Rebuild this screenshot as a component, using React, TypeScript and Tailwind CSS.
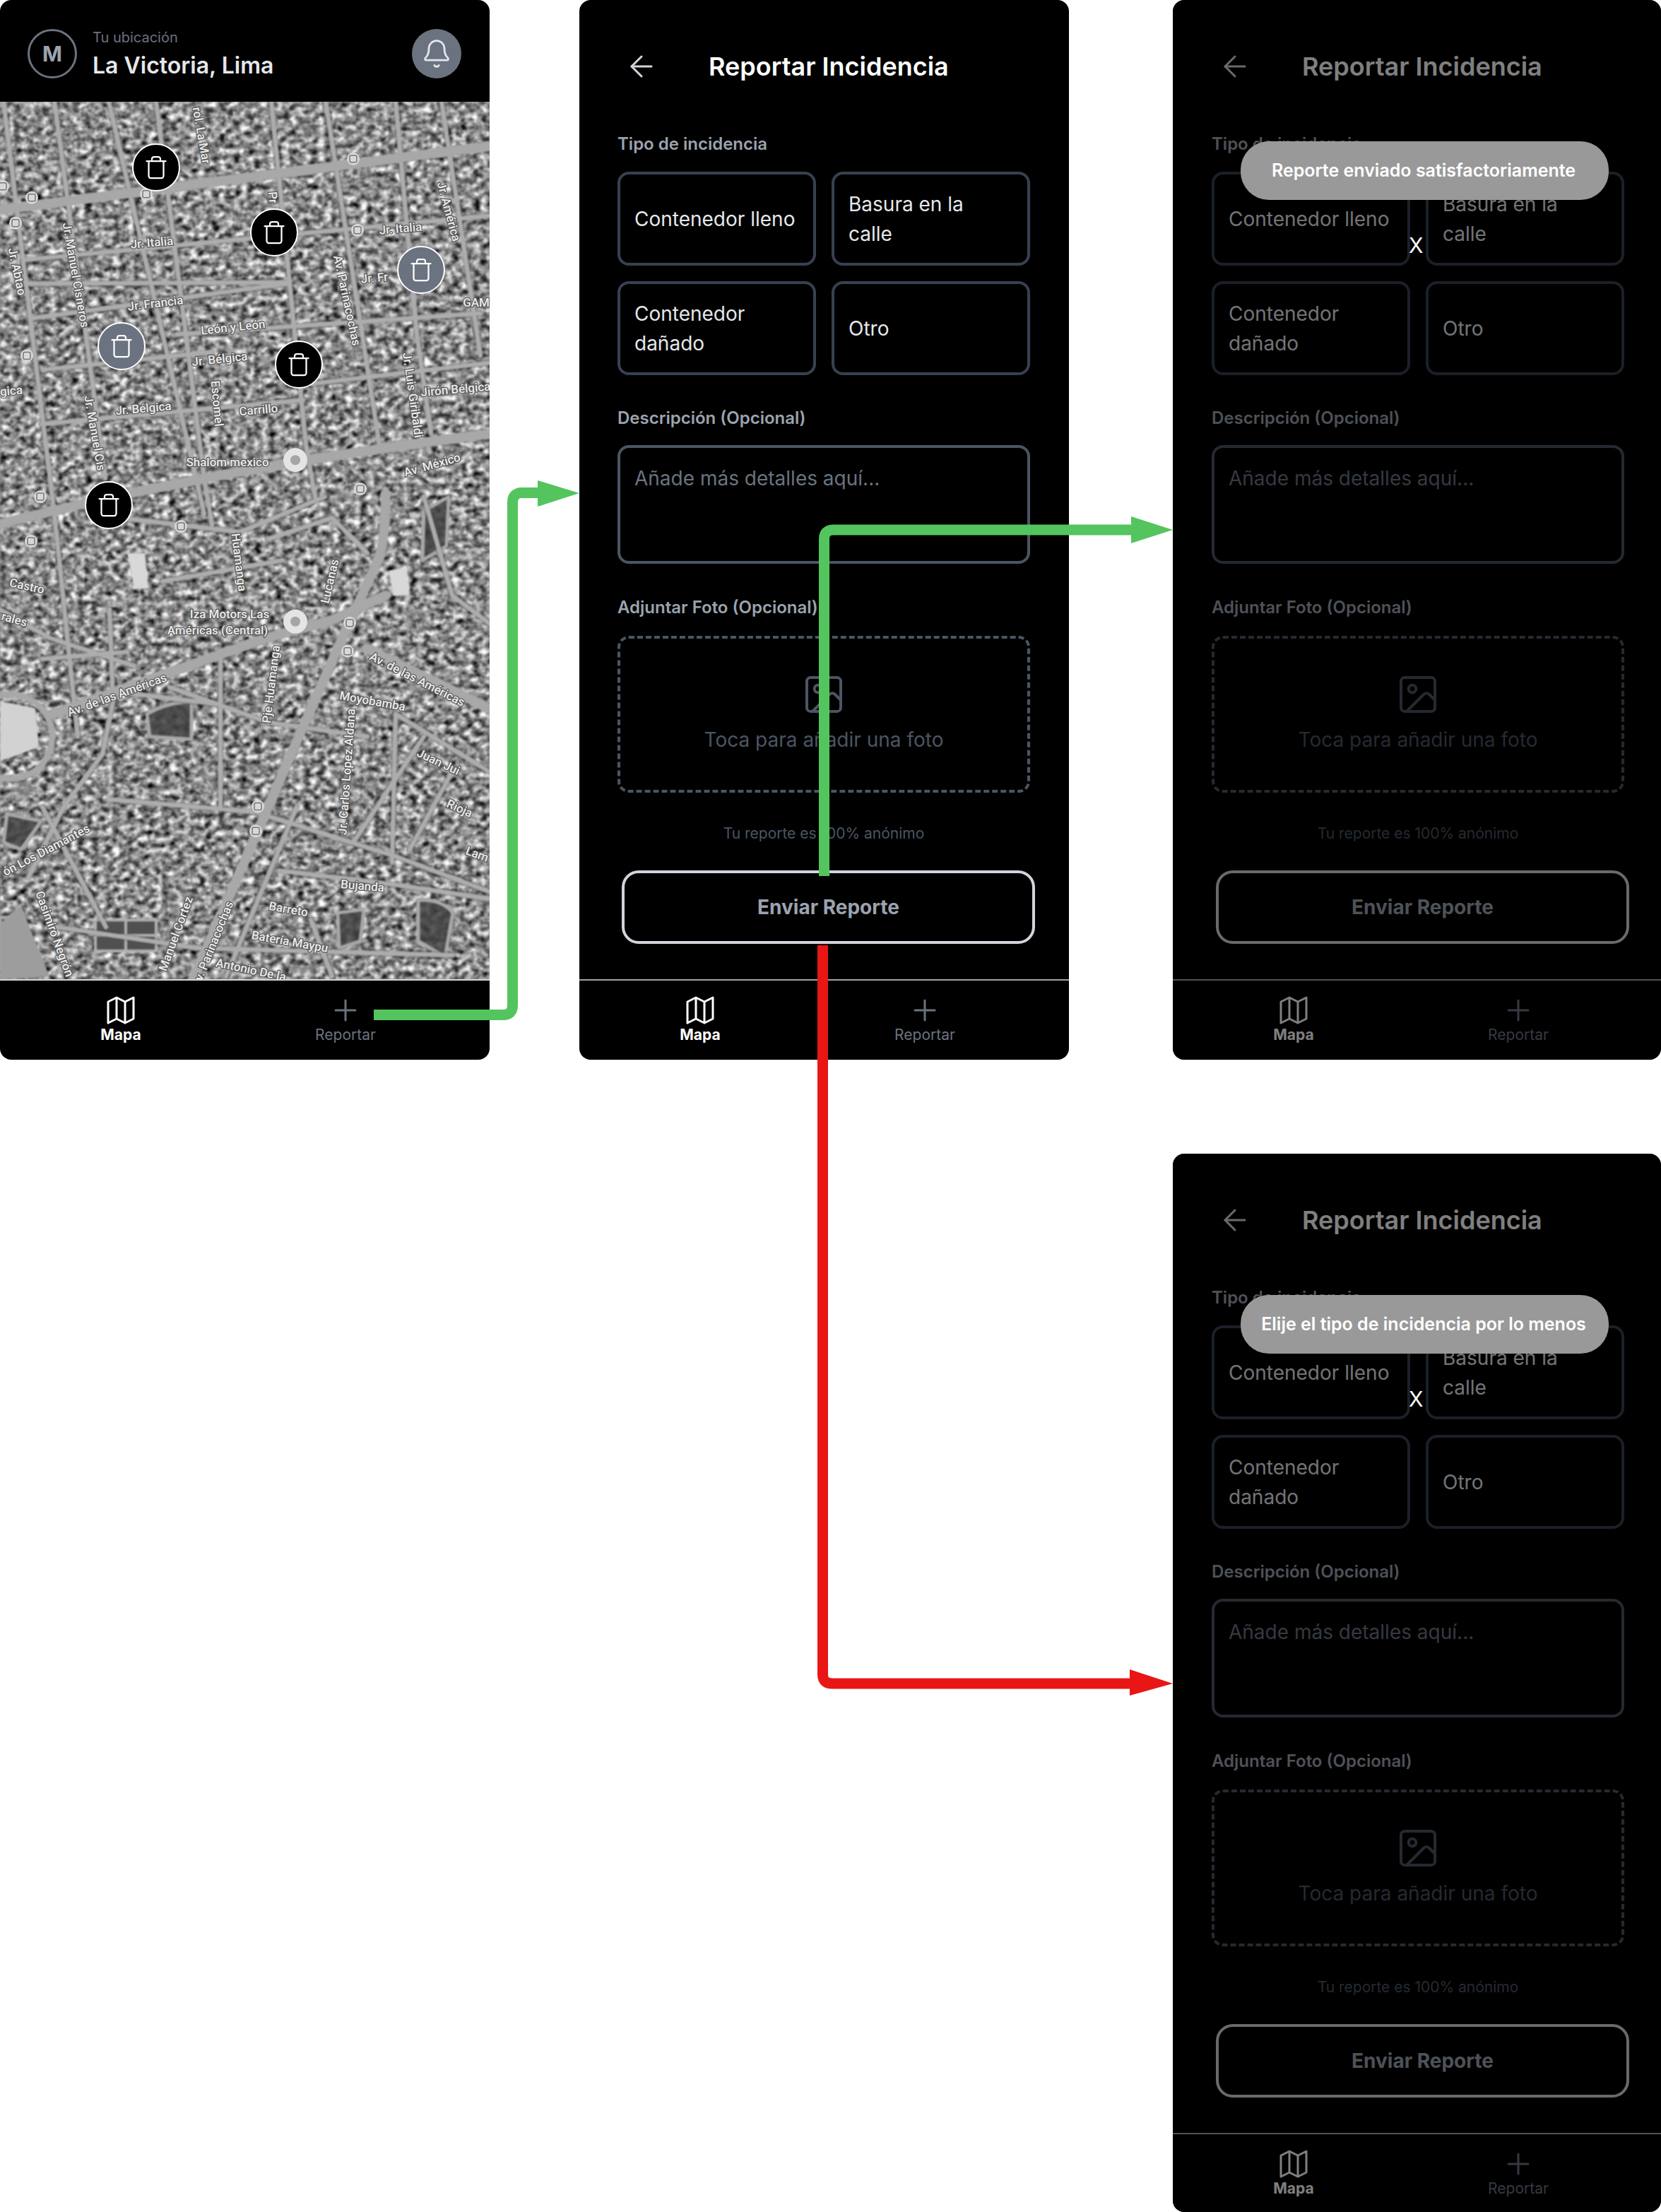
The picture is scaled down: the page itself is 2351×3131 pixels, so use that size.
import { ArrowLeft, Bell, Image, Plus, Trash } from "lucide-react";

const options = ["Contenedor lleno", "Basura en la calle", "Contenedor dañado", "Otro"];

const markers = [
  { x: 221, y: 93, dark: true },
  { x: 388, y: 185, dark: true },
  { x: 596, y: 238, dark: false },
  { x: 172, y: 346, dark: false },
  { x: 423, y: 372, dark: true },
  { x: 154, y: 571, dark: true },
];

// map drawing, coordinates are relative to the top of the map
const wideRoads = [
  "M-5 154 L700 62",
  "M-5 600 Q300 520 700 470",
  "M546 556 Q545 620 537 645 L452 833 L271 1250",
  "M75 868 L375 761 L470 735 L546 700",
  "M519 775 L700 864",
];

const roads = [
  "M5 0 L77 584 L110 900",
  "M77 0 L149 534",
  "M154 0 L289 584",
  "M221 0 L289 534 L300 600",
  "M384 0 L433 486 L446 560",
  "M461 0 L537 486",
  "M560 0 L590 330 L610 470",
  "M625 0 L680 360",
  "M36 224 L700 161",
  "M36 258 L406 256",
  "M45 307 L406 258",
  "M250 330 L680 300",
  "M59 457 L429 423",
  "M60 380 L300 355",
  "M440 400 L693 370",
  "M154 989 L361 1007 L560 1070 L693 1120",
  "M160 836 L300 853",
  "M312 788 L312 1002",
  "M560 868 L555 1078",
  "M155 720 L160 850 L145 925 L90 1000 L40 1100",
  "M0 720 L70 760 L190 800",
  "M60 1000 L150 1170",
  "M170 590 L340 610 L460 560",
  "M240 830 L380 880 L520 900",
  "M395 1090 L560 1110 L693 1130",
  "M80 1170 L280 1200 L640 1210",
  "M420 1000 L320 1240",
  "M560 868 L693 950",
  "M600 560 L640 700 L693 740",
  "M380 620 L470 590 L520 640",
  "M230 680 L400 650",
  "M440 1160 L470 1240",
  "M600 900 L500 1050",
  "M60 790 L180 780",
  "M640 950 L580 1060",
];

const parks = [
  "M208 868 Q240 850 271 851 L271 904 L212 900 Z",
  "M10 1010 L58 1020 L30 1060 L5 1050 Z",
  "M592 1132 Q625 1130 641 1150 L630 1212 L592 1190 Z",
  "M600 580 L635 560 L632 630 L598 650 Z",
  "M0 1156 L30 1160 L30 1220 L0 1230 Z",
  "M478 1150 L515 1145 L510 1190 L480 1200 Z",
];

const mapLabels = [
  { t: "Jr. Italia", x: 215, y: 201, r: -5 },
  { t: "Jr. Manuel Cisneros", x: 106, y: 246, r: 80 },
  { t: "Jr. Abtao", x: 23, y: 241, r: 78 },
  { t: "Jr. Francia", x: 220, y: 287, r: -7 },
  { t: "León y León", x: 330, y: 321, r: -6 },
  { t: "Jr. Bélgica", x: 311, y: 366, r: -6 },
  { t: "Jr. Bélgica", x: 203, y: 436, r: -5 },
  { t: "Carrillo", x: 366, y: 438, r: -5 },
  { t: "Escomel", x: 306, y: 428, r: 85 },
  { t: "Jr. Manuel Cis", x: 133, y: 470, r: 80 },
  { t: "Shalom mexico", x: 322, y: 512, r: 0 },
  { t: "Av. Parinacochas", x: 490, y: 282, r: 78 },
  { t: "Jr. Italia", x: 567, y: 181, r: -5 },
  { t: "Jr. América", x: 634, y: 156, r: 75 },
  { t: "Jr. Luis Giribaldi", x: 583, y: 416, r: 82 },
  { t: "Jirón Bélgica", x: 645, y: 409, r: -5 },
  { t: "Av. México", x: 612, y: 516, r: -16 },
  { t: "Jr. Fr", x: 530, y: 251, r: -5 },
  { t: "GAM", x: 674, y: 286, r: 0 },
  { t: "gica", x: 16, y: 411, r: -5 },
  { t: "rol. La Mar", x: 284, y: 48, r: 80 },
  { t: "Pr", x: 385, y: 136, r: 85 },
  { t: "Huamanga", x: 337, y: 653, r: 83 },
  { t: "Castro", x: 38, y: 688, r: 12 },
  { t: "rales", x: 20, y: 735, r: 15 },
  { t: "Lucanas", x: 468, y: 680, r: -77 },
  { t: "Iza Motors Las", x: 325, y: 728, r: 0 },
  { t: "Américas (Central)", x: 308, y: 751, r: 0 },
  { t: "Av. de las Américas", x: 166, y: 842, r: -20 },
  { t: "Pje Huamanga", x: 385, y: 826, r: -83 },
  { t: "Av. de las Américas", x: 590, y: 820, r: 27 },
  { t: "Moyobamba", x: 527, y: 851, r: 10 },
  { t: "Jr. Carlos Lopez Aldana", x: 492, y: 950, r: -86 },
  { t: "Juan Jui", x: 620, y: 937, r: 25 },
  { t: "Rioja", x: 650, y: 1003, r: 25 },
  { t: "Casimiro Negrón", x: 76, y: 1180, r: 70 },
  { t: "ón Los Diamantes", x: 66, y: 1062, r: -28 },
  { t: "Manuel Cortez", x: 250, y: 1180, r: -70 },
  { t: "Av. Parinacochas", x: 302, y: 1195, r: -68 },
  { t: "Bujanda", x: 513, y: 1113, r: 5 },
  { t: "Barreto", x: 408, y: 1146, r: 10 },
  { t: "Batería Maypu", x: 410, y: 1192, r: 10 },
  { t: "Antonio De la", x: 355, y: 1232, r: 12 },
  { t: "Lam", x: 675, y: 1068, r: 20 },
];

const stops = [
  [45, 136], [207, 131], [22, 172], [500, 81], [506, 182], [38, 360], [57, 560],
  [510, 549], [256, 602], [44, 623], [495, 739], [492, 779], [365, 999], [362, 1034], [4, 120],
];

function MapPicture() {
  return (
    <svg viewBox="0 0 693 1244" preserveAspectRatio="none" className="block w-full h-full">
      <defs>
        <filter id="blocks" x="0" y="0" width="100%" height="100%" colorInterpolationFilters="sRGB">
          <feTurbulence type="fractalNoise" baseFrequency="0.1 0.12" numOctaves="3" seed="11" />
          <feColorMatrix
            type="matrix"
            values="1.05 1.05 0 0 -0.5 1.05 1.05 0 0 -0.5 1.05 1.05 0 0 -0.5 0 0 0 0 1"
          />
          <feGaussianBlur stdDeviation="0.9" />
        </filter>
        <filter id="soft" colorInterpolationFilters="sRGB">
          <feGaussianBlur stdDeviation="1.3" />
        </filter>
      </defs>
      <rect width="693" height="1244" fill="#8a8a8a" />
      <rect width="693" height="1244" filter="url(#blocks)" />
      <g filter="url(#soft)" fill="none" strokeLinecap="round" strokeLinejoin="round">
        {parks.map((d) => (
          <path key={d} d={d} fill="#404040" fillOpacity="0.85" stroke="#a8a8a8" strokeWidth="5" />
        ))}
        <circle cx="14" cy="900" r="60" stroke="#a8a8a8" strokeWidth="9" />
        <path d="M0 850 L50 860 L55 915 L0 935 Z" fill="#d2d2d2" />
        <path d="M135 1160 h86 v44 h-86 Z M135 1182 h86 M178 1160 v44" stroke="#b0b0b0" strokeWidth="4" fill="#505050" />
        <path d="M556 700 L580 700 L575 660 L550 665 Z M190 690 L210 690 L205 640 L180 640 Z" fill="#d8d8d8" />
        <path d="M0 1165 L30 1140 L70 1240 L0 1244 Z" fill="#9d9d9d" />
        {roads.map((d) => (
          <path key={d} d={d} stroke="#3e3e3e" strokeWidth="10" strokeOpacity="0.35" />
        ))}
        {roads.map((d) => (
          <path key={d + "t"} d={d} stroke="#adadad" strokeWidth="6.5" />
        ))}
        {wideRoads.map((d) => (
          <path key={d} d={d} stroke="#a8a8a8" strokeWidth="14" />
        ))}
      </g>
      {stops.map(([x, y]) => (
        <g key={`${x}-${y}`}>
          <circle cx={x} cy={y} r="9" fill="#d8d8d8" />
          <rect x={x - 5} y={y - 5} width="10" height="10" rx="2" fill="none" stroke="#777777" strokeWidth="1.5" />
        </g>
      ))}
      <g fontFamily="Roboto, sans-serif" fontSize="17" fontWeight="500" textAnchor="middle">
        {mapLabels.map((l) => (
          <text
            key={l.t + l.x}
            x={l.x}
            y={l.y}
            transform={`rotate(${l.r} ${l.x} ${l.y})`}
            dominantBaseline="middle"
            fill="#ececec"
            stroke="#5a5a5a"
            strokeWidth="2.5"
            paintOrder="stroke"
          >
            {l.t}
          </text>
        ))}
      </g>
      <circle cx="418" cy="508" r="17" fill="#e4e4e4" />
      <circle cx="418" cy="508" r="7" fill="#a5a5a5" />
      <circle cx="418" cy="737" r="17" fill="#e4e4e4" />
      <circle cx="418" cy="737" r="7" fill="#a5a5a5" />
    </svg>
  );
}

function FoldedMap({ className }: { className: string }) {
  return (
    <svg viewBox="0 0 24 24" fill="none" stroke="currentColor" strokeWidth="1.5" strokeLinejoin="round" className={className}>
      <path d="M3 6 L9 3 L15 6 L21 3 V18 L15 21 L9 18 L3 21 Z" />
      <path d="M9 3 V18 M15 6 V21" />
    </svg>
  );
}

function BottomNav() {
  return (
    <nav className="flex flex-1 pl-[12px] pt-[18px]">
      <div className="flex w-[318px] flex-col items-center text-white">
        <FoldedMap className="size-[48px]" />
        <span className="-mt-[3px] text-[21px] leading-[28px] font-bold">Mapa</span>
      </div>
      <div className="flex w-[318px] flex-col items-center text-[#6b7280]">
        <Plus className="size-[48px]" strokeWidth={1.5} />
        <span className="-mt-[3px] text-[21px] leading-[28px]">Reportar</span>
      </div>
    </nav>
  );
}

function MapScreen() {
  return (
    <section className="flex h-[1500px] w-[693px] flex-col overflow-hidden rounded-[16px] bg-black">
      <header className="flex h-[144px] items-center pl-[39px] pr-[40px] pt-[8px]">
        <div className="flex size-[70px] items-center justify-center rounded-full border-[3px] border-[#6b7280] text-[30px] font-bold text-[#9ca3af]">
          M
        </div>
        <div className="ml-[22px] flex-1">
          <p className="text-[20px] leading-[28px] text-[#6b7280]">Tu ubicación</p>
          <p className="mt-[5px] text-[32px] leading-[42px] font-semibold text-[#e5e7eb]">La Victoria, Lima</p>
        </div>
        <div className="flex size-[70px] items-center justify-center rounded-full bg-[#6b7280] text-[#e5e7eb]">
          <Bell className="size-[44px]" strokeWidth={1.5} />
        </div>
      </header>
      <div className="relative h-[1244px] border-b-[2px] border-[#d1d5db] bg-[#8a8a8a]">
        <MapPicture />
        {markers.map((m) => (
          <div
            key={m.x}
            className={`absolute flex size-[68px] -translate-x-1/2 -translate-y-1/2 items-center justify-center rounded-full border-[2px] border-white text-white ${
              m.dark ? "bg-black" : "bg-[#6b7280]"
            }`}
            style={{ left: m.x, top: m.y }}
          >
            <Trash className="size-[36px]" strokeWidth={1.5} />
          </div>
        ))}
      </div>
      <BottomNav />
    </section>
  );
}

function FieldLabel({ children }: { children: string }) {
  return <p className="h-[32px] text-[24px] leading-[32px] font-semibold text-[#9ca3af]">{children}</p>;
}

function ReportScreen({ toast, last }: { toast?: string; last?: boolean }) {
  return (
    <section
      className={`relative flex flex-col overflow-hidden rounded-[16px] bg-black ${
        last ? "h-[1498px]" : "h-[1500px]"
      } ${toast ? "w-[691px]" : "w-[693px]"}`}
    >
      <header className="flex h-[188px] items-center pl-[64px] text-white">
        <ArrowLeft className="size-[48px] text-[#d1d5db]" strokeWidth={1.5} />
        <h1 className="ml-[71px] text-[36px] leading-[48px] font-semibold">Reportar Incidencia</h1>
      </header>
      <div className={toast ? "pl-[55px]" : "pl-[54px]"}>
        <div className="w-[584px]">
          <FieldLabel>Tipo de incidencia</FieldLabel>
          <div className="mt-[23px] grid grid-cols-2 gap-[22px]">
            {options.map((o) => (
              <div
                key={o}
                className="flex h-[133px] items-center rounded-[16px] border-[4px] border-[#374151] pl-[20px] text-[28px] leading-[42px] text-[#e5e7eb]"
              >
                <span className="w-[232px]">{o}</span>
              </div>
            ))}
          </div>
          <div className="mt-[45px]">
            <FieldLabel>Descripción (Opcional)</FieldLabel>
          </div>
          <div className="mt-[22px] h-[168px] rounded-[16px] border-[4px] border-[#4b5563] px-[20px] pt-[22px] text-[28px] leading-[42px] text-[#6b7280]">
            Añade más detalles aquí...
          </div>
          <div className="mt-[46px]">
            <FieldLabel>Adjuntar Foto (Opcional)</FieldLabel>
          </div>
          <div className="mt-[24px] flex h-[222px] flex-col items-center rounded-[16px] border-[4px] border-dashed border-[#4b5563] pt-[47px] text-[#4b5563]">
            <Image className="size-[64px]" strokeWidth={1.5} />
            <p className="mt-[11px] text-[28px] leading-[42px]">Toca para añadir una foto</p>
          </div>
          <p className="mt-[42px] text-center text-[21px] leading-[32px] text-[#4b5563]">Tu reporte es 100% anónimo</p>
        </div>
        <button className="mt-[36px] ml-[6px] flex h-[104px] w-[585px] items-center justify-center rounded-[24px] border-[4px] border-[#d1d5db] text-[28px] font-bold text-[#9ca3af]">
          Enviar Reporte
        </button>
      </div>
      <div className="mt-[50px] h-[2px] bg-[#a3a3a3]" />
      <BottomNav />
      {toast && (
        <>
          <div className="absolute inset-0 bg-black/50" />
          <div className="absolute left-[96px] top-[200px] flex h-[83px] w-[521px] items-center justify-center rounded-[40px] bg-[#999999] pr-[3px] text-[25px] font-semibold text-white">
            {toast}
          </div>
          <span className="absolute left-[334px] top-[328px] text-[30px] leading-[38px] text-white">X</span>
        </>
      )}
    </section>
  );
}

function FlowArrows() {
  return (
    <svg viewBox="0 0 2351 3131" fill="none" className="pointer-events-none absolute inset-0 size-full">
      <g stroke="#54c45e" strokeWidth="15">
        <path d="M529 1436.5 H712 Q725.5 1436.5 725.5 1423 V711 Q725.5 697.5 739 697.5 H765" />
        <path d="M1166.5 1240 V763 Q1166.5 750 1180 750 H1605" />
      </g>
      <path d="M761 680 L820 698 L761 717 Z M1601 731 L1660 750 L1601 769 Z" fill="#54c45e" />
      <path d="M1164.5 1338 V2370 Q1164.5 2383 1178 2383 H1602" stroke="#e91616" strokeWidth="15" />
      <path d="M1599 2363 L1660 2383 L1599 2400 Z" fill="#e91616" />
    </svg>
  );
}

export default function App() {
  return (
    <main className="relative flex h-[3131px] w-[2351px] overflow-hidden bg-white font-['Inter',sans-serif]">
      <MapScreen />
      <div className="ml-[127px]">
        <ReportScreen />
      </div>
      <div className="ml-[147px] flex flex-col gap-[133px]">
        <ReportScreen toast="Reporte enviado satisfactoriamente" />
        <ReportScreen toast="Elije el tipo de incidencia por lo menos" last />
      </div>
      <FlowArrows />
    </main>
  );
}
